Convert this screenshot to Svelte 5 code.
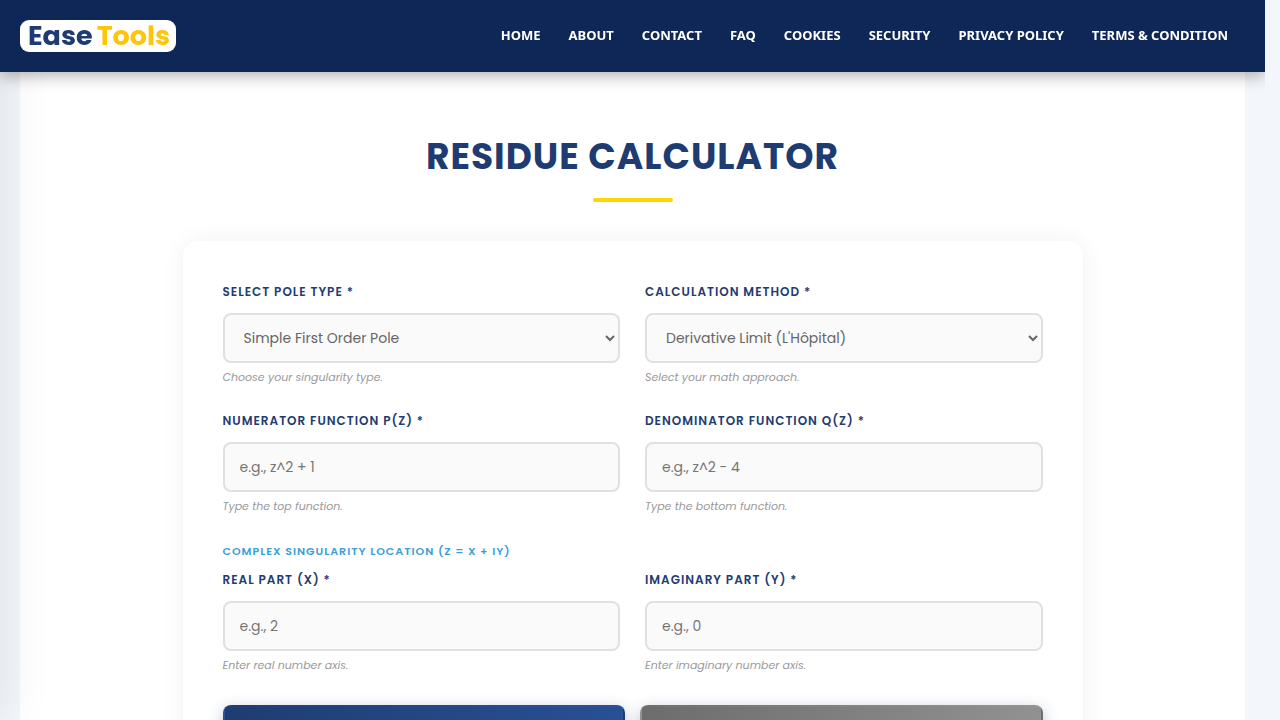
<script lang="ts">
	type Field = {
		id: string;
		label: string;
		hint: string;
		placeholder?: string;
		options?: string[];
	};

	const links = [
		'Home',
		'About',
		'Contact',
		'FAQ',
		'Cookies',
		'Security',
		'Privacy Policy',
		'Terms & Condition'
	];

	const functionFields: Field[] = [
		{
			id: 'pole-type',
			label: 'Select Pole Type *',
			hint: 'Choose your singularity type.',
			options: ['Simple First Order Pole', 'Second Order Pole', 'Higher Order Pole']
		},
		{
			id: 'method',
			label: 'Calculation Method *',
			hint: 'Select your math approach.',
			options: ["Derivative Limit (L'Hôpital)", 'Direct Limit', 'Laurent Series']
		},
		{
			id: 'numerator',
			label: 'Numerator Function P(z) *',
			hint: 'Type the top function.',
			placeholder: 'e.g., z^2 + 1'
		},
		{
			id: 'denominator',
			label: 'Denominator Function Q(z) *',
			hint: 'Type the bottom function.',
			placeholder: 'e.g., z^2 - 4'
		}
	];

	const locationFields: Field[] = [
		{ id: 'real', label: 'Real Part (x) *', hint: 'Enter real number axis.', placeholder: 'e.g., 2' },
		{
			id: 'imaginary',
			label: 'Imaginary Part (y) *',
			hint: 'Enter imaginary number axis.',
			placeholder: 'e.g., 0'
		}
	];
</script>

{#snippet fieldGrid(fields: Field[])}
	<div class="grid">
		{#each fields as field (field.id)}
			<div class="field">
				<label for={field.id}>{field.label}</label>
				{#if field.options}
					<select id={field.id}>
						{#each field.options as option}
							<option>{option}</option>
						{/each}
					</select>
				{:else}
					<input id={field.id} type="text" placeholder={field.placeholder} />
				{/if}
				<small>{field.hint}</small>
			</div>
		{/each}
	</div>
{/snippet}

<div class="page">
	<header class="header">
		<a class="logo" href="#home">Ease <span>Tools</span></a>
		<nav class="nav">
			{#each links as link}
				<a href="#{link.toLowerCase().replaceAll(' ', '-')}">{link}</a>
			{/each}
		</nav>
	</header>

	<div class="drawer" aria-hidden="true"></div>

	<main class="main">
		<h1>Residue Calculator</h1>

		<form class="card">
			{@render fieldGrid(functionFields)}
			<h2>Complex Singularity Location (z = x + iy)</h2>
			{@render fieldGrid(locationFields)}

			<div class="actions">
				<button type="button" class="btn" aria-label="Calculate"></button>
				<button type="reset" class="btn btn--reset" aria-label="Reset"></button>
			</div>
		</form>
	</main>
</div>

<style>
	:global(body) {
		background: #f3f6fa;
	}

	.page {
		height: 100vh;
		margin-right: 15px;
		overflow: hidden;
		font-family: Poppins, Inter, sans-serif;
	}

	.header {
		position: relative;
		z-index: 2;
		display: flex;
		align-items: center;
		justify-content: space-between;
		box-sizing: border-box;
		height: 72px;
		padding: 0 37px 0 20px;
		background: #0f2756;
		box-shadow: 0 4px 15px rgba(0, 0, 0, 0.3);
	}

	.logo {
		display: flex;
		gap: 4px;
		padding: 0 6px 0 8px;
		border-radius: 9px;
		background: #fff;
		color: #1e3c72;
		font-size: 27px;
		font-weight: 700;
		line-height: 32px;
		text-decoration: none;
	}

	.logo span {
		color: #ffc50d;
	}

	.nav {
		display: flex;
		gap: 28px;
		padding-bottom: 2px;
	}

	.nav a {
		color: #fff;
		font-family: 'Noto Sans', sans-serif;
		font-size: 13px;
		font-weight: 700;
		line-height: 20px;
		text-decoration: none;
		text-transform: uppercase;
		white-space: nowrap;
	}

	/* closed side menu, only its shadow reaches the page */
	.drawer {
		position: fixed;
		z-index: 1;
		top: 0;
		bottom: 0;
		left: -280px;
		width: 280px;
		box-shadow: 0 0 50px rgba(0, 0, 0, 0.1);
	}

	.main {
		margin: 0 20px;
		padding: 60px 20px;
		background: #fff;
	}

	h1 {
		margin: 0 0 39px;
		color: #1e3c72;
		font-size: 36px;
		font-weight: 700;
		line-height: 50px;
		letter-spacing: 1px;
		text-align: center;
		text-transform: uppercase;
	}

	h1::after {
		content: '';
		display: block;
		width: 80px;
		height: 4px;
		margin: 16px auto 0;
		border-radius: 2px;
		background: #ffd700;
	}

	.card {
		box-sizing: border-box;
		max-width: 900px;
		margin: 0 auto;
		padding: 40px;
		border-radius: 15px;
		background: #fff;
		box-shadow: 0 0 25px rgba(0, 0, 0, 0.06);
	}

	.grid {
		display: grid;
		grid-template-columns: 1fr 1fr;
		gap: 23px 25px;
	}

	.field {
		display: flex;
		flex-direction: column;
	}

	label {
		margin-bottom: 10px;
		color: #1e3c72;
		font-size: 12px;
		font-weight: 600;
		line-height: 22px;
		letter-spacing: 1px;
		text-transform: uppercase;
	}

	input,
	select {
		box-sizing: border-box;
		width: 100%;
		height: 50px;
		padding: 0 15px;
		border: 2px solid #e0e0e0;
		border-radius: 8px;
		background: #fafafa;
		color: #666;
		font-family: inherit;
		font-size: 14px;
	}

	input::placeholder {
		color: #757575;
	}

	small {
		margin-top: 4px;
		color: #999;
		font-size: 11px;
		font-style: italic;
		line-height: 20px;
	}

	h2 {
		margin: 25px 0 8px;
		color: #3a9fd5;
		font-size: 11px;
		font-weight: 600;
		line-height: 20px;
		letter-spacing: 1px;
		text-transform: uppercase;
	}

	.actions {
		display: flex;
		gap: 15px;
		margin-top: 30px;
	}

	/* the gradient repeats under the transparent border */
	.btn {
		flex: 1;
		height: 50px;
		border: 2px solid transparent;
		border-radius: 8px;
		background: linear-gradient(135deg, #1e3c72, #2a5298);
		box-shadow: 0 4px 15px rgba(30, 60, 114, 0.3);
	}

	.btn--reset {
		background: linear-gradient(135deg, #6c6c6c, #959595);
	}
</style>
